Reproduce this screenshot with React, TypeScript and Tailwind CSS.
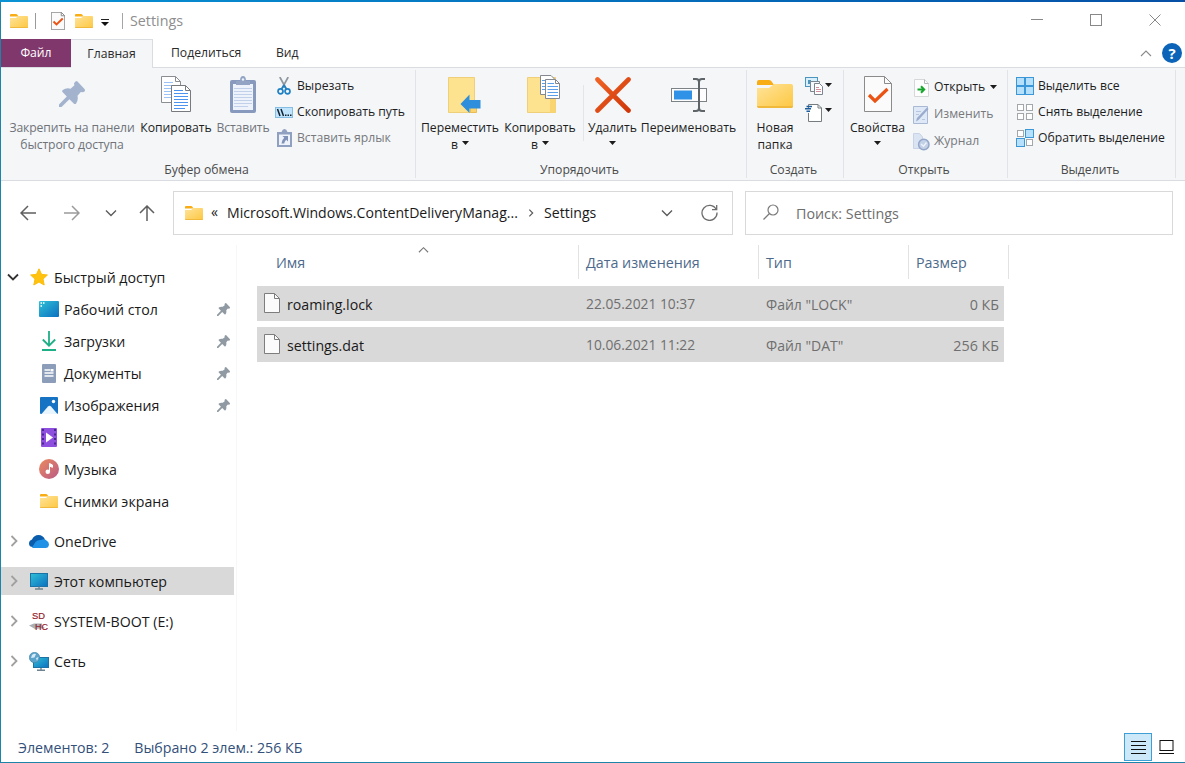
import type { ReactNode } from "react";

function Folder({ size = 18 }: { size?: number }) {
  return (
    <svg width={size} height={(size * 28) / 36} viewBox="0 0 36 28" className="shrink-0">
      <defs>
        <linearGradient id="fold" x1="0" y1="0" x2="1" y2="1">
          <stop offset="0" stopColor="#ffe49b" />
          <stop offset="1" stopColor="#fdc740" />
        </linearGradient>
      </defs>
      <path d="M0 2Q0 0 2 0H12Q14 0 15 2L17 5H0Z" fill="#f9ad14" />
      <path d="M0 8H12L17 4H34Q36 4 36 6V26Q36 28 34 28H2Q0 28 0 26Z" fill="url(#fold)" />
      <path d="M0 26Q0 28 2 28H34Q36 28 36 26Z" fill="#f0b93c" />
    </svg>
  );
}

function CheckDoc({ w, h, line = 1 }: { w: number; h: number; line?: number }) {
  return (
    <svg width={w} height={h} viewBox="0 0 28 36" className="shrink-0" preserveAspectRatio="none">
      <path d="M.5 .5H20.5L27.5 7.5V35.5H.5Z" fill="#fbfbfb" stroke="#8b8b8b" strokeWidth={line} />
      <path d="M20.5 .5V7.5H27.5" fill="none" stroke="#8b8b8b" strokeWidth={line} />
      <path d="M5 19L11 25L23.500 13" fill="none" stroke="#ea5314" strokeWidth={2.6 + line * 0.6} />
    </svg>
  );
}

function Pin({ size, color }: { size: number; color: string }) {
  return (
    <svg width={size} height={size} viewBox="0 0 26 26" className="shrink-0" fill={color}>
      <path d="M16.500 .5Q17.500 -.5 18.500 .5L25.500 8Q26.500 9.500 25.500 10.500L24 11.300L21.800 11L18.500 14.700Q19.500 19.500 17 22.700Q16 23.500 15 22.700L10.400 18.200L2.500 26H0V23.500L7.800 15.600L3.500 11Q2.700 10 3.800 9Q7 6.600 11.600 7.700L15.400 4.300L15 2.200Z" />
    </svg>
  );
}

function CopyPages({ w, h }: { w: number; h: number }) {
  return (
    <svg width={w} height={h} viewBox="0 0 30 36" className="shrink-0">
      <path d="M.5 .5H14.500L19.500 5.500V26.500H.5Z" fill="#fff" stroke="#8a8d91" />
      <path d="M14.500 .5V5.500H19.500" fill="none" stroke="#8a8d91" />
      <path d="M3 6.500H12M3 9.500H17M3 12.500H17M3 15.500H17M3 18.500H17M3 21.500H17" stroke="#9cc3f5" />
      <path d="M10.500 9.500H24.500L29.500 14.500V35.500H10.500Z" fill="#fff" stroke="#777a7e" />
      <path d="M24.500 9.500V14.500H29.500" fill="none" stroke="#777a7e" />
      <path d="M13 14.500H22M13 17.500H27M13 20.500H27M13 23.500H27M13 26.500H27M13 29.500H27M13 32.500H24" stroke="#4b93ee" />
    </svg>
  );
}

function Clipboard() {
  return (
    <svg width="26" height="37" viewBox="0 0 26 37">
      <rect x="0" y="4" width="26" height="33" rx="2" fill="#8799bd" />
      <rect x="3" y="8" width="20" height="26" fill="#eef2fb" />
      <path d="M4 12.500H22M4 15.500H22M4 18.500H22M4 21.500H22M4 24.500H22M4 27.500H22M4 30.500H18" stroke="#c3d0ea" />
      <path d="M6 9V5H10Q10 0 13 0T16 5H20V9Z" fill="#92a3c4" />
      <circle cx="13" cy="3.500" r="1.200" fill="#eef2fb" />
    </svg>
  );
}

function Scissors() {
  return (
    <svg width="14" height="18" viewBox="0 0 14 18" fill="none">
      <path d="M2.800 0L8.800 11M11.200 0L5.200 11" stroke="#8f979f" strokeWidth="1.700" />
      <circle cx="3.500" cy="14.300" r="2.500" stroke="#1f80c4" strokeWidth="1.700" />
      <circle cx="10.500" cy="14.300" r="2.500" stroke="#1f80c4" strokeWidth="1.700" />
      <path d="M4.500 12L7 8.500L9.500 12" stroke="#1f80c4" strokeWidth="1.800" />
    </svg>
  );
}

function PathIcon() {
  return (
    <svg width="18" height="11" viewBox="0 0 18 11">
      <rect x=".5" y=".5" width="17" height="10" fill="#bfe4fb" stroke="#86bde2" />
      <path d="M2.500 2L5 9M6 2L8.500 9" stroke="#123" strokeWidth="1.500" />
      <path d="M10 8.200H11.500M12.500 8.200H14M15 8.200H16.500" stroke="#123" strokeWidth="1.400" />
    </svg>
  );
}

function ShortcutIcon() {
  return (
    <svg width="15" height="18" viewBox="0 0 15 18">
      <path d="M0 3H4.500Q5.500 0 7.500 0T10.500 3H15V18H0Z" fill="#8fa0c0" />
      <rect x="2" y="5.500" width="11" height="10.500" fill="#eef2fa" />
      <path d="M5.500 7H11V12.500L9.200 10.700Q7.500 12.200 7.200 14.500H4.500Q4.700 11 7.300 8.800Z" fill="#7f91b6" />
    </svg>
  );
}

function MoveTo() {
  return (
    <svg width="33" height="36" viewBox="0 0 33 36">
      <path d="M.5 .5H26.500V35.500H.5Z" fill="#fde28f" stroke="#efcf77" />
      <path d="M22.500 31V35.500H28.500V31" stroke="#e9bd55" fill="#fbd46f" />
      <path d="M12.500 27L21.500 17.500V23H32.500V31.500H21.500V36Z" fill="#2f8fdc" />
    </svg>
  );
}

function CopyTo() {
  return (
    <svg width="33" height="39" viewBox="0 0 33 39">
      <path d="M.5 2.500H28.500V37.500H.5Z" fill="#fde28f" stroke="#efcf77" />
      <path d="M23 37.500V23H28.500V37.500Z" fill="#fad46f" />
      <g stroke="#85888c">
        <path d="M13.500 .5H24L28 4.500V19.500H13.500Z" fill="#fff" />
        <path d="M18.500 4.500H28.500L32.500 8.500V23.500H18.500Z" fill="#fff" />
        <path d="M28.500 4.500V8.500H32.500" fill="none" />
      </g>
      <path d="M15 5.500H18M15 8.500H18M15 11.500H18M15 14.500H18M20.500 8.500H27M20.500 11.500H31M20.500 14.500H31M20.500 17.500H31M20.500 20.500H31" stroke="#5d9ee8" />
    </svg>
  );
}

function DeleteX() {
  return (
    <svg width="36" height="36" viewBox="0 0 36 36" className="mt-0.5">
      <defs>
        <linearGradient id="del" x1="0" y1="0" x2="1" y2="1">
          <stop offset="0" stopColor="#ef6224" />
          <stop offset="1" stopColor="#cf3608" />
        </linearGradient>
      </defs>
      <path d="M2.500 2.500L33.500 33.500M33.500 2.500L2.500 33.500" stroke="url(#del)" strokeWidth="4.600" strokeLinecap="round" />
    </svg>
  );
}

function RenameIcon() {
  return (
    <svg width="36" height="34" viewBox="0 0 36 34" fill="none" className="mt-0.5">
      <rect x=".5" y="10.500" width="35" height="13" fill="#fdfdfd" stroke="#7d8287" />
      <rect x="3" y="12.500" width="18" height="9" fill="#2f92e6" />
      <path d="M22 1H25Q28 1 28 4V30Q28 33 25 33H22M34 1H31Q28 1 28 4M34 33H31Q28 33 28 30" stroke="#5e6468" strokeWidth="2" />
    </svg>
  );
}

function NewItem() {
  return (
    <svg width="19" height="19" viewBox="0 0 19 19" fill="none">
      <rect x=".5" y=".5" width="12" height="9" fill="#d9effc" stroke="#4c95bd" />
      <rect x="3" y="3" width="3" height="4" fill="#4c95bd" />
      <path d="M5.500 4.500H14.500V14.500H5.500Z" fill="#f5f9fc" stroke="#7b858d" />
      <path d="M9.500 6.500H14.500L17.500 9.500V17.500H9.500Z" fill="#fff" stroke="#7b858d" />
      <path d="M11 10.500H14M11 12.500H16M11 14.500H16" stroke="#d38f9f" />
    </svg>
  );
}

function EasyAccess() {
  return (
    <svg width="18" height="19" viewBox="0 0 18 19" fill="none">
      <path d="M3.500 5V1.500H13L16.500 5V18.500H3.500V10" fill="#fff" stroke="#777c80" />
      <path d="M13 1.500V5H16.500" stroke="#777c80" />
      <path d="M1.500 3.500H7M0 5.800H6M1.500 8.200H5" stroke="#1c5d9b" strokeWidth="1.400" />
    </svg>
  );
}

function OpenIcon() {
  return (
    <svg width="15" height="18" viewBox="0 0 15 18" fill="none">
      <path d="M.5 .5H10.500L14.500 4.500V17.500H.5Z" fill="#fdfdfd" stroke="#d5d7d9" />
      <path d="M10.500 .5V4.500H14.500" stroke="#b5b8ba" />
      <path d="M3.500 10.500H9.500M7 7.200L10.200 10.500L7 13.800" stroke="#17a62d" strokeWidth="2" />
    </svg>
  );
}

function EditIcon() {
  return (
    <svg width="16" height="18" viewBox="0 0 16 18" fill="none">
      <path d="M.5 .5H14.500V17.500H.5Z" fill="#dfe8f6" stroke="#a9b9d3" />
      <path d="M3 15.500L4 12L14 1.500L15.500 3L5.500 14Z" fill="#9aacce" />
      <path d="M3 5.500H8M3 8.500H6M9 13.500H12" stroke="#b7c6df" />
    </svg>
  );
}

function HistoryIcon() {
  return (
    <svg width="17" height="18" viewBox="0 0 17 18" fill="none">
      <path d="M.5 .5H6.500L9.500 4V15.500H.5Z" fill="#dbe4f2" stroke="#c8d3e6" />
      <circle cx="10.800" cy="11.500" r="5.200" fill="#c3d0e6" stroke="#93a6c8" strokeWidth="1.500" />
      <path d="M8 11L10.500 13.200L13.500 9.500" stroke="#eef3fb" strokeWidth="1.300" />
    </svg>
  );
}

function SelectIcon({ on }: { on: boolean[] }) {
  const full = on.every(Boolean);
  return (
    <svg width="18" height="18" viewBox="0 0 18 18">
      {on.map((o, i) => {
        const x = (i % 2) * 9;
        const y = i > 1 ? 9 : 0;
        return o ? (
          <rect key={i} x={x + 0.5} y={y + 0.5} width="8" height="8" fill="#b6e0fb" stroke="#3b97d8" />
        ) : (
          <rect key={i} x={x + 1.5} y={y + 1.5} width="6" height="6" fill="#fff" stroke="#a3a7aa" />
        );
      })}
      {full && <path d="M9 0V18M0 9H18" stroke="#3b97d8" strokeWidth="2" />}
    </svg>
  );
}

function Caret({ className = "" }: { className?: string }) {
  return (
    <svg width="7" height="4" viewBox="0 0 7 4" className={`shrink-0 ${className}`}>
      <path d="M0 0H7L3.500 4Z" fill="#1c1c1c" />
    </svg>
  );
}

function Chevron({ dir, size = 12, color = "#5c5c5c", width = 1.4 }: { dir: "up" | "down" | "right"; size?: number; color?: string; width?: number }) {
  const d = { up: "M1 9L6 4L11 9", down: "M1 3.500L6 8.500L11 3.500", right: "M3.500 1L8.500 6L3.500 11" }[dir];
  return (
    <svg width={size} height={size} viewBox="0 0 12 12" fill="none" className="shrink-0">
      <path d={d} stroke={color} strokeWidth={width} />
    </svg>
  );
}

function BigButton({ icon, label, sub, className, muted }: { icon: ReactNode; label: string; sub?: ReactNode; className: string; muted?: boolean }) {
  return (
    <div className={`flex shrink-0 flex-col items-center whitespace-nowrap ${muted ? "text-[#707378]" : "text-[#1e1e1e]"} ${className}`}>
      <div className="flex h-[42px] items-center justify-center">{icon}</div>
      <div className="mt-1 h-[17px] leading-[17px]">{label}</div>
      <div className="flex h-[17px] items-center justify-center gap-1 leading-[17px]">{sub}</div>
    </div>
  );
}

function SmallButton({ icon, label, muted, caret, tall }: { icon: ReactNode; label: string; muted?: boolean; caret?: boolean; tall?: boolean }) {
  return (
    <div className={`flex items-center whitespace-nowrap ${tall ? "h-[27px]" : "h-[26px]"} ${muted ? "text-[#77797d]" : "text-[#1e1e1e]"}`}>
      <span className="mr-1 flex w-[18px] justify-center">{icon}</span>
      {label}
      {caret && <Caret className="mb-0.5 ml-[5px]" />}
    </div>
  );
}

function Group({ title, className, children }: { title: string; className: string; children: ReactNode }) {
  return (
    <div className={`flex shrink-0 flex-col border-r border-[#e1e3e6] ${className}`}>
      <div className="flex h-[91px] pt-[3px]">{children}</div>
      <div className="pr-[3px] text-center leading-[17px] text-[#4a4a4a]">{title}</div>
    </div>
  );
}

function TitleBar() {
  return (
    <div className="flex h-[37px] items-center pl-[9px]">
      <Folder />
      <div className="ml-[7px] h-4 w-px bg-[#9a9a9a]" />
      <div className="ml-[15px] flex">
        <CheckDoc w={14} h={18} line={2} />
      </div>
      <div className="ml-2.5">
        <Folder />
      </div>
      <svg width="8" height="8" viewBox="0 0 8 8" className="ml-2 mt-1">
        <path d="M0 .5H8" stroke="#222" />
        <path d="M0 3H8L4 7Z" fill="#111" />
      </svg>
      <div className="ml-[13px] h-4 w-px bg-[#a5a5a5]" />
      <div className="ml-[7px] text-[14.3px] text-[#8e8e8e]">Settings</div>
      <div className="ml-auto mr-[24px] flex items-center gap-[47px] pb-0.5">
        <svg width="12" height="12" viewBox="0 0 12 12">
          <path d="M0 5.500H12" stroke="#888" />
        </svg>
        <svg width="12" height="12" viewBox="0 0 12 12">
          <rect x=".5" y=".5" width="11" height="11" fill="none" stroke="#888" />
        </svg>
        <svg width="12" height="12" viewBox="0 0 12 12">
          <path d="M.5 .5L11.500 11.500M11.500 .5L.5 11.500" stroke="#888" />
        </svg>
      </div>
    </div>
  );
}

function Tabs() {
  return (
    <div className="flex h-7 items-center text-[12.2px] text-[#2b2b2b]">
      <div className="flex h-full w-[70px] items-center justify-center bg-[#80376b] pt-px text-white">Файл</div>
      <div className="relative flex h-[29px] w-[82px] items-center justify-center self-start border-r border-t border-[#d9dce0] bg-[#f4f6f8]">Главная</div>
      <div className="ml-[18px] w-[70px] whitespace-nowrap pt-px">Поделиться</div>
      <div className="ml-[35px] pt-px">Вид</div>
      <div className="ml-auto mr-[3px] flex items-center gap-2.5">
        <Chevron dir="up" color="#8a8a8a" width={1.1} />
        <div className="flex size-5 items-center justify-center rounded-full bg-[#0c64b8] text-[15px] font-bold text-white">?</div>
      </div>
    </div>
  );
}

function Ribbon() {
  return (
    <div className="flex h-[114px] border-y border-[#d9dce0] bg-[#f4f6f8] py-0.5 text-[12.2px]">
      <Group title="Буфер обмена" className="w-[415px]">
        <BigButton
          muted
          className="ml-1 w-[134px] tracking-[-0.1px]"
          icon={<Pin size={26} color="#a3b3ce" />}
          label="Закрепить на панели"
          sub="быстрого доступа"
        />
        <BigButton className="w-[74px]" icon={<CopyPages w={30} h={36} />} label="Копировать" />
        <BigButton muted className="ml-px w-[58px] tracking-[-0.1px]" icon={<Clipboard />} label="Вставить" />
        <div className="ml-[3px]">
          <SmallButton icon={<Scissors />} label="Вырезать" />
          <SmallButton icon={<PathIcon />} label="Скопировать путь" />
          <SmallButton muted icon={<ShortcutIcon />} label="Вставить ярлык" />
        </div>
      </Group>
      <Group title="Упорядочить" className="w-[331px]">
        <BigButton
          className="ml-[3px] w-[82px]"
          icon={<span className="ml-2 mt-0.5"><MoveTo /></span>}
          label="Переместить"
          sub={<>в <Caret className="mb-1" /></>}
        />
        <BigButton
          className="w-[78px]"
          icon={<span className="ml-1.5"><CopyTo /></span>}
          label="Копировать"
          sub={<>в <Caret className="mb-1" /></>}
        />
        <div className="ml-[4px] mt-3 h-14 w-px bg-[#e3e5e8]" />
        <BigButton className="w-[57px]" icon={<DeleteX />} label="Удалить" sub={<Caret className="mb-1" />} />
        <BigButton className="w-[95px]" icon={<RenameIcon />} label="Переименовать" />
      </Group>
      <Group title="Создать" className="w-[97px]">
        <BigButton className="w-[56px]" icon={<Folder size={36} />} label="Новая" sub="папка" />
        <div className="ml-[2px]">
          <div className="flex h-[26px] items-center gap-px">
            <NewItem />
            <Caret className="mb-0.5" />
          </div>
          <div className="flex h-[26px] items-center gap-[2px]">
            <EasyAccess />
            <Caret className="mb-1" />
          </div>
        </div>
      </Group>
      <Group title="Открыть" className="w-[164px]">
        <BigButton className="ml-1 w-[59px]" icon={<CheckDoc w={28} h={36} />} label="Свойства" sub={<Caret className="mb-1" />} />
        <div className="ml-[5px] mt-px">
          <SmallButton tall caret icon={<OpenIcon />} label="Открыть" />
          <SmallButton tall muted icon={<EditIcon />} label="Изменить" />
          <SmallButton tall muted icon={<HistoryIcon />} label="Журнал" />
        </div>
      </Group>
      <Group title="Выделить" className="w-[168px]">
        <div className="ml-2">
          <SmallButton icon={<SelectIcon on={[true, true, true, true]} />} label="Выделить все" />
          <SmallButton icon={<SelectIcon on={[false, false, false, false]} />} label="Снять выделение" />
          <SmallButton icon={<SelectIcon on={[false, true, true, false]} />} label="Обратить выделение" />
        </div>
      </Group>
    </div>
  );
}

function AddressBar() {
  return (
    <div className="flex h-[64px] items-center pl-[19px] text-[14.1px]">
      <svg width="16" height="16" viewBox="0 0 16 16" fill="none" stroke="#5f5f5f" strokeWidth="1.500">
        <path d="M16 8H1M8 1L1 8L8 15" />
      </svg>
      <svg width="16" height="16" viewBox="0 0 16 16" fill="none" stroke="#9b9b9b" strokeWidth="1.500" className="ml-7">
        <path d="M0 8H15M8 1L15 8L8 15" />
      </svg>
      <div className="ml-[25px]">
        <Chevron dir="down" />
      </div>
      <svg width="16" height="16" viewBox="0 0 16 16" fill="none" stroke="#5f5f5f" strokeWidth="1.500" className="ml-[22px]">
        <path d="M8 16V1M1 8L8 1L15 8" />
      </svg>
      <div className="ml-[18px] flex h-11 w-[560px] items-center border border-[#d9d9d9] pb-px pl-[11px] text-[#1a1a1a]">
        <Folder />
        <span className="ml-2 w-4 pb-0.5">«</span>
        <span className="w-[292px] whitespace-nowrap">Microsoft.Windows.ContentDeliveryManag...</span>
        <span className="ml-2 flex w-[17px]">
          <Chevron dir="right" size={8} width={1.800} />
        </span>
        <span>Settings</span>
        <div className="ml-auto mr-[14px] flex items-center gap-[28px]">
          <Chevron dir="down" />
          <svg width="17" height="17" viewBox="0 0 17 17" fill="none" stroke="#6d6d6d" strokeWidth="1.300">
            <path d="M15.200 5.500A7.500 7.500 0 1 0 16 8.500M15.700 1V5.700H11" />
          </svg>
        </div>
      </div>
      <div className="ml-3 flex h-11 w-[428px] items-center border border-[#d9d9d9] pl-[17px] text-[14.3px] text-[#6e6e6e]">
        <svg width="16" height="16" viewBox="0 0 16 16" fill="none" stroke="#7a7a7a" strokeWidth="1.200" className="mb-0.5">
          <circle cx="10" cy="6" r="5" />
          <path d="M6.500 9.500L.5 15.500" />
        </svg>
        <span className="ml-[17px] pt-0.5">Поиск: Settings</span>
      </div>
    </div>
  );
}

const desktop = (
  <svg width="20" height="16" viewBox="0 0 20 16">
    <defs>
      <linearGradient id="desk" x1="0" y1="0" x2="1" y2="1">
        <stop offset="0" stopColor="#2fc0d6" />
        <stop offset="1" stopColor="#0b6fc0" />
      </linearGradient>
    </defs>
    <rect width="20" height="16" rx="1" fill="url(#desk)" />
    <path d="M1.500 2H3M4 2H5.500M1.500 5H3" stroke="#fff" strokeWidth="1.400" />
  </svg>
);

const downloads = (
  <svg width="16" height="20" viewBox="0 0 16 20" fill="none" stroke="#1faf87" strokeWidth="1.800">
    <path d="M8 0V14.500M1.800 8.500L8 14.700L14.200 8.500M1 19H15" />
  </svg>
);

const documents = (
  <svg width="14" height="19" viewBox="0 0 14 19">
    <rect width="14" height="19" rx="1" fill="#8b9db8" />
    <path d="M2.500 6H8M2.500 9H11.500M2.500 12H11.500" stroke="#fff" strokeWidth="1.300" />
    <rect x="8.500" y="5" width="3" height="2.500" fill="#fff" />
  </svg>
);

const pictures = (
  <svg width="18" height="17" viewBox="0 0 18 17">
    <rect width="18" height="17" rx="1" fill="#1673c4" />
    <path d="M1.500 17L8 9.500Q9.500 8 11 9.500L17.500 17Z" fill="#e9f5ff" />
    <circle cx="13.500" cy="4.500" r="1.700" fill="#fff" />
  </svg>
);

const video = (
  <svg width="16" height="19" viewBox="0 0 16 19">
    <rect width="16" height="19" rx="1" fill="#8f4fde" />
    <path d="M2 1V19M14 1V19" stroke="#4b2494" strokeWidth="2" strokeDasharray="2 2.500" />
    <path d="M5 4.500L12 9.500L5 14.500Z" fill="#fff" />
  </svg>
);

const music = (
  <svg width="20" height="20" viewBox="0 0 20 20">
    <defs>
      <linearGradient id="mus" x1="0" y1="0" x2="1" y2="1">
        <stop offset="0" stopColor="#ec8a5e" />
        <stop offset="1" stopColor="#b85a86" />
      </linearGradient>
    </defs>
    <circle cx="10" cy="10" r="10" fill="url(#mus)" />
    <circle cx="8.800" cy="12.800" r="2.300" fill="#fff" />
    <path d="M10.500 13V4.500L13.500 6V8.300L11 7.300" fill="#fff" stroke="#fff" />
  </svg>
);

const star = (
  <svg width="18" height="18" viewBox="0 0 18 18" fill="#ffc20e" stroke="#fbbc0c" strokeLinejoin="round">
    <path d="M9 .8L11.500 6.300L17.400 7L13 11.100L14.200 17L9 14L3.800 17L5 11.100L.6 7L6.500 6.300Z" />
  </svg>
);

const oneDrive = (
  <svg width="20" height="13" viewBox="0 0 20 13">
    <path d="M4 12Q0 12 0 8.500Q0 5.500 3 4.500Q5 0 9.500 0Q14 0 16 4.500L10 9Z" fill="#0a5cad" />
    <path d="M3 12.500L6.500 7Q9 4.500 12 5Q15 3.500 17.500 5.500Q20 7 20 9.500Q19.500 13 16.500 13H4Z" fill="#1e90e6" />
  </svg>
);

const monitor = (
  <svg width="18" height="17" viewBox="0 0 18 17">
    <rect x=".5" y=".5" width="17" height="13" fill="url(#desk)" stroke="#1a72a5" />
    <path d="M9 13.500V16M5 16H13" stroke="#6f8490" strokeWidth="1.400" />
  </svg>
);

const sdCard = (
  <svg width="20" height="22" viewBox="0 0 20 22">
    <path d="M0 15.500L5 13.500H13V16L16 18L6 19Z" fill="#a9afb5" />
    <g fill="#96222d" fontFamily="Liberation Sans, sans-serif" fontSize="9" stroke="#96222d" strokeWidth=".2">
      <text x="3" y="9" textLength="13" lengthAdjust="spacingAndGlyphs">SD</text>
      <text x="6" y="19.500" textLength="13" lengthAdjust="spacingAndGlyphs">HC</text>
    </g>
  </svg>
);

const network = (
  <svg width="20" height="19" viewBox="0 0 20 19">
    <rect x="4.500" y="5.500" width="15" height="10" fill="url(#desk)" stroke="#1a72a5" />
    <path d="M12 16V18M8 18.200H16" stroke="#6f8490" strokeWidth="1.400" />
    <circle cx="5.500" cy="5.500" r="5.200" fill="#5ba3cb" stroke="#3f7fa6" strokeWidth=".6" />
    <path d="M3 3Q5 1 7 2L5.500 5.500L2 6ZM7 6L9.500 5L8 9Z" fill="#d5eaf5" />
  </svg>
);

const pinned = [
  { icon: desktop, label: "Рабочий стол", pin: true },
  { icon: downloads, label: "Загрузки", pin: true },
  { icon: documents, label: "Документы", pin: true },
  { icon: pictures, label: "Изображения", pin: true },
  { icon: video, label: "Видео" },
  { icon: music, label: "Музыка" },
  { icon: <Folder />, label: "Снимки экрана" },
];

const roots = [
  { icon: oneDrive, label: "OneDrive" },
  { icon: monitor, label: "Этот компьютер", active: true },
  { icon: sdCard, label: "SYSTEM-BOOT (E:)" },
  { icon: network, label: "Сеть" },
];

function Sidebar() {
  return (
    <div className="w-[236px] shrink-0 border-r border-[#f7f7f7] pt-[16px] text-[14.2px] text-[#1a1a1a]">
      <div className="flex h-8 items-center pl-[6px]">
        <Chevron dir="down" color="#333" width={1.800} />
        <span className="ml-2.5 mr-[5px] flex w-5 justify-center">{star}</span>
        <span className="pt-0.5">Быстрый доступ</span>
      </div>
      {pinned.map((p) => (
        <div key={p.label} className="flex h-8 items-center pl-[38px] pr-[6px]">
          <span className="mr-[5px] flex w-5 justify-center">{p.icon}</span>
          <span className="pt-0.5">{p.label}</span>
          {p.pin && (
            <span className="ml-auto">
              <Pin size={13} color="#8f9aa3" />
            </span>
          )}
        </div>
      ))}
      <div className="mt-2.5 flex flex-col gap-3">
        {roots.map((r) => (
          <div key={r.label} className={`flex h-7 w-[233px] items-center pl-[7px] ${r.active ? "bg-[#d9d9d9]" : ""}`}>
            <Chevron dir="right" color="#a0a0a0" width={1.800} />
            <span className="ml-[9px] mr-[5px] flex w-5 justify-center">{r.icon}</span>
            <span className="pt-0.5">{r.label}</span>
          </div>
        ))}
      </div>
    </div>
  );
}

const files = [
  { name: "roaming.lock", date: "22.05.2021 10:37", type: 'Файл "LOCK"', size: "0 КБ" },
  { name: "settings.dat", date: "10.06.2021 11:22", type: 'Файл "DAT"', size: "256 КБ" },
];

function FileList() {
  return (
    <div className="ml-5 text-[14px]">
      <div className="flex h-[34px] items-center text-[14.3px] text-[#4d6a8c]">
        <div className="relative flex h-full w-[322px] items-center border-r border-[#e2e2e2] pl-[19px] pt-0.5">
          Имя
          <span className="absolute left-[161px] top-[-1px]">
            <Chevron dir="up" size={11} color="#777" width={1.200} />
          </span>
        </div>
        <div className="flex h-full w-[180px] items-center border-r border-[#e2e2e2] pl-[7px] pt-0.5">Дата изменения</div>
        <div className="flex h-full w-[150px] items-center border-r border-[#e2e2e2] pl-[7px] pt-0.5">Тип</div>
        <div className="flex h-full w-[100px] items-center border-r border-[#e2e2e2] pl-[7px] pt-0.5">Размер</div>
      </div>
      <div className="mt-[7px] flex w-[747px] flex-col gap-1.5">
        {files.map((f) => (
          <div key={f.name} className="flex h-[35px] items-center bg-[#d9d9d9] pt-0.5 text-[#6f6f6f]">
            <div className="flex w-[329px] items-center pl-[7px] text-[14.2px] text-[#1a1a1a]">
              <svg width="16" height="20" viewBox="0 0 16 20" className="mb-1 mr-[7px]">
                <path d="M.5 .5H10.500L15.500 5.500V19.500H.5Z" fill="#fbfbfb" stroke="#7d7d7d" />
                <path d="M10.500 .5V5.500H15.500" fill="none" stroke="#7d7d7d" />
              </svg>
              {f.name}
            </div>
            <div className="w-[180px] text-[13.8px]">{f.date}</div>
            <div className="w-[150px]">{f.type}</div>
            <div className="flex-1 pr-[5px] text-right text-[14.3px]">{f.size}</div>
          </div>
        ))}
      </div>
    </div>
  );
}

function StatusBar() {
  return (
    <div className="flex h-[31px] items-center pl-[17px] text-[14.2px] text-[#33507a]">
      <span className="pt-0.5">Элементов: 2</span>
      <span className="ml-[25px] pt-0.5">Выбрано 2 элем.: 256 КБ</span>
      <div className="ml-auto mr-[11px] flex items-center gap-[7px]">
        <div className="flex size-7 items-center justify-center border border-[#3d9fd6] bg-[#cde8f8]">
          <svg width="15" height="14" viewBox="0 0 15 14" className="mt-0.5">
            <path d="M0 .5H15M0 4.500H15M0 8.500H15M0 12.500H15" stroke="#111" />
          </svg>
        </div>
        <svg width="15" height="14" viewBox="0 0 15 14">
          <rect x="1" y=".5" width="13" height="10" fill="none" stroke="#111" />
          <path d="M0 13.500H15" stroke="#111" />
        </svg>
      </div>
    </div>
  );
}

export default function App() {
  return (
    <div className="flex h-[763px] w-[1185px] flex-col overflow-hidden bg-white font-['Open_Sans','Noto_Sans',sans-serif]">
      <div className="h-0.5 shrink-0 bg-linear-to-r from-[#0a93d4] to-[#0650a6]" />
      <div className="flex flex-1 flex-col border-b border-l border-[#1b84a8]">
        <TitleBar />
        <Tabs />
        <Ribbon />
        <AddressBar />
        <div className="flex flex-1">
          <Sidebar />
          <FileList />
        </div>
        <StatusBar />
      </div>
    </div>
  );
}
